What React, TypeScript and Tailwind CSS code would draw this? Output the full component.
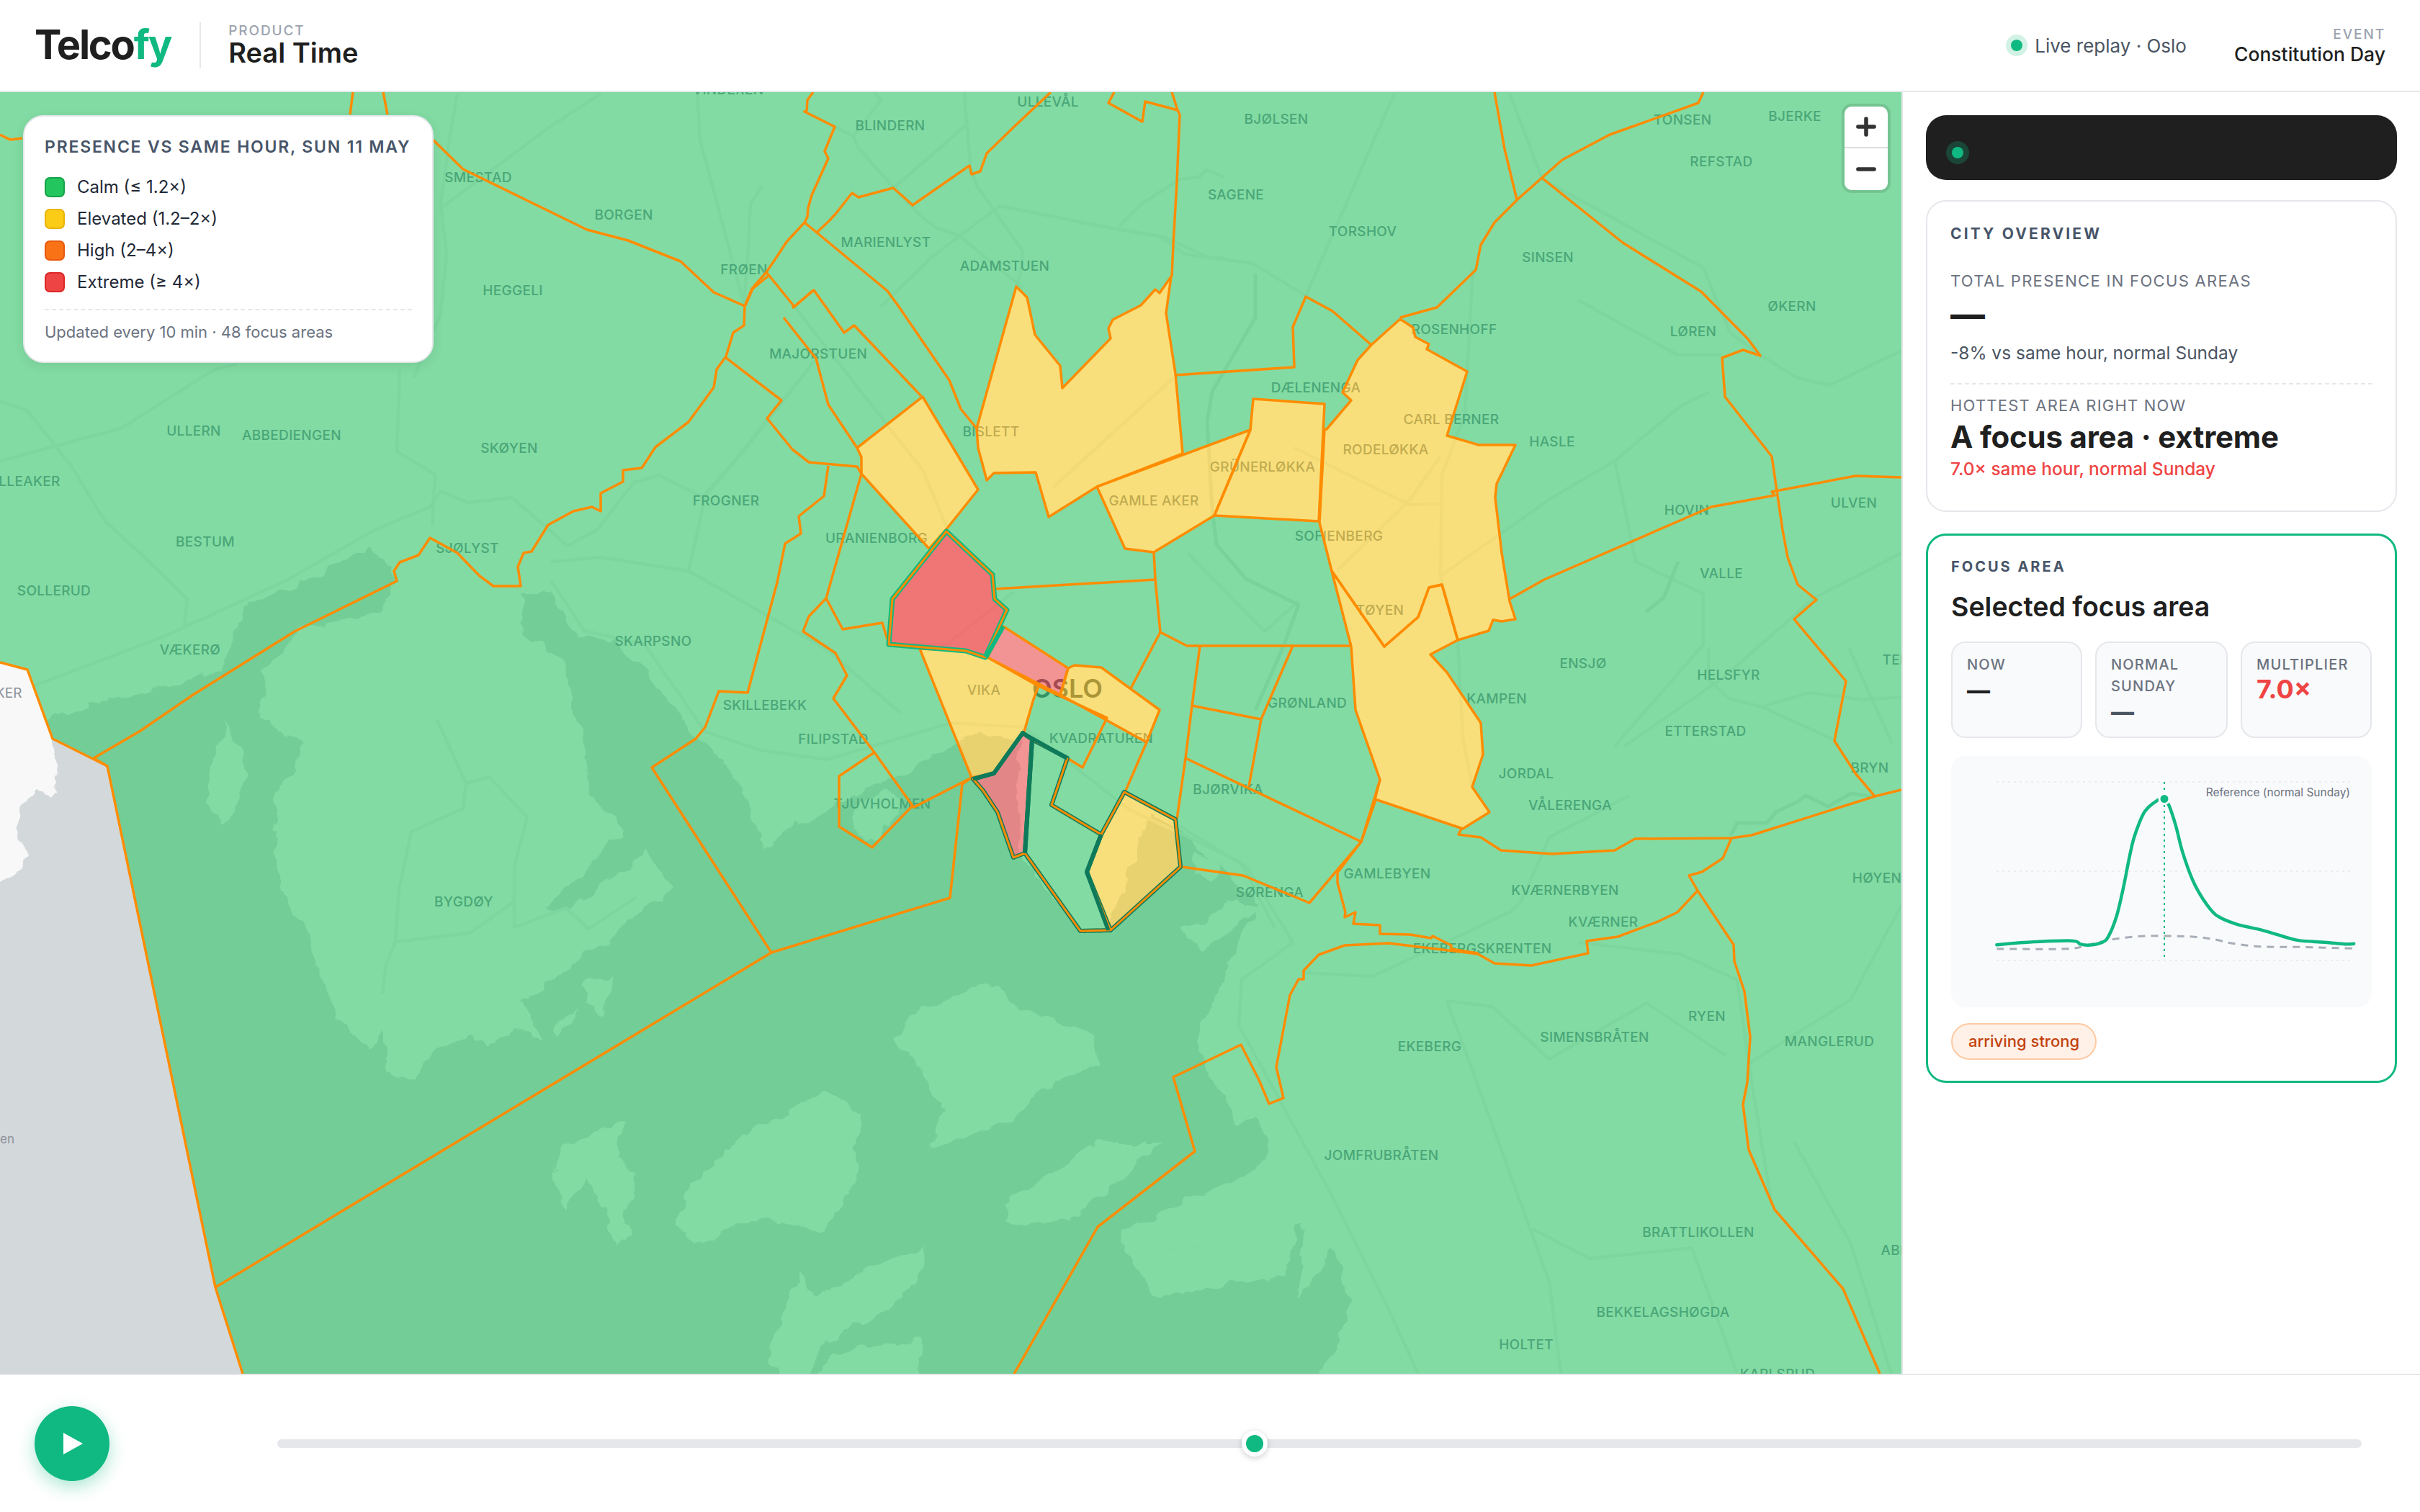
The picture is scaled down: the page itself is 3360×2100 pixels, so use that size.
import { Minus, Plus } from "lucide-react";

/* Map geometry uses page pixels: the svg viewBox starts at y=128, just under the header. */

const WATER =
  "77,997 122,978 230,953 306,934 337,844 413,812 520,758 551,806 528,850 413,876 367,933 363,997 371,1000 420,1035 380,1111 388,1235 429,1299 446,1352 473,1417 513,1458 536,1428 536,1487 580,1499 598,1464 652,1434 688,1452 714,1428 750,1440 728,1393 768,1364 804,1334 821,1323 933,1235 897,1188 777,1270 757,1258 804,1217 866,1150 817,1103 813,1047 796,985 780,914 727,883 723,825 765,822 803,883 857,889 972,1029 1000,1053 1036,1100 1062,1182 1080,1164 1100,1150 1328,1034 1361,1016 1418,1031 1408,1101 1415,1186 1500,1293 1539,1292 1562,1235 1596,1131 1637,1152 1748,1257 1669,1424 1665,1461 1685,1497 1716,1560 1744,1550 1760,1581 1748,1623 1629,1675 1574,1701 1550,1712 1570,1751 1787,1701 1807,1700 1803,1806 1851,1733 1878,1811 1825,1940 -30,1940 -30,1050";

const ISLANDS = [
  "1241,1446 1277,1399 1384,1364 1400,1390 1479,1424 1519,1435 1523,1477 1447,1518 1400,1560 1290,1593 1312,1540 1270,1470",
  "960,1645 1036,1575 1143,1516 1196,1546 1188,1634 1143,1710 1045,1692 960,1734 938,1698",
  "768,1634 786,1587 866,1557 857,1610 884,1634 870,1687 879,1716 853,1728 826,1657 812,1634 786,1680",
  "1062,1886 1112,1763 1129,1804 1188,1769 1286,1733 1268,1786 1196,1839 1134,1869 1116,1940",
  "1112,1940 1160,1880 1277,1860 1277,1940",
  "1400,1665 1526,1586 1613,1586 1558,1639 1479,1694 1400,1700",
  "808,1367 848,1352 835,1405 815,1395",
  "768,1428 804,1399 800,1420 775,1436",
  "286,1117 312,1000 344,1076 312,1144",
  "1185,1120 1225,1100 1250,1110 1215,1170 1190,1165",
  "1641,1293 1669,1320 1748,1262 1716,1252 1677,1273",
  "1661,1184 1693,1199 1680,1225 1655,1215",
  "1570,1751 1787,1701 1800,1701 1790,1770 1600,1800",
];

const ROADS = [
  "46,953 230,883 398,806 520,736 597,704 612,682 650,698 711,691 788,758 830,735 880,670 915,660 975,690 1030,630 1132,500",
  "0,557 38,570 99,647 145,723 207,780 260,832 256,870",
  "0,640 168,595 298,513 329,506",
  "555,513 551,627 604,659 600,730",
  "765,780 834,774 956,793 1148,902 1250,990",
  "765,806 811,876 895,895 979,1016 1056,1042 1148,1055 1321,1004 1421,1010 1569,1125 1636,1156 1723,1198 1770,1289",
  "612,289 765,175 834,130",
  "635,130 624,194 612,283 620,353 612,436 574,525",
  "968,130 972,194 1033,423",
  "956,793 979,691 1132,500",
  "2140,248 2227,296 2365,372 2402,462 2445,494 2496,525 2540,535 2640,487",
  "1500,309 1609,328 1645,353 1740,366 1813,411 1849,432",
  "1936,130 1813,411",
  "2045,372 2034,576 2002,659 2000,800 2024,889 2031,1023 2044,1093",
  "2096,130 2140,245",
  "2373,545 2333,564 2242,640 2155,691 2000,800",
  "2242,640 2271,780 2365,825 2365,895 2242,1036",
  "2640,768 2518,831 2394,940 2256,1036",
  "2191,417 2329,493 2391,493",
  "1649,768 1756,877 1803,835",
  "1408,822 1314,895 1234,895",
  "1857,792 1957,695 1999,635",
  "1629,525 1462,677",
  "1797,622 1957,701 2000,700",
  "1100,422 1281,653 1314,731",
  "1637,1147 1732,1205 1795,1309 1724,1361 1720,1424 1780,1534 1843,1649 1922,1806 1969,1908",
  "1811,1351 1906,1356 2096,1267 2112,1252 2151,1163 2262,1105",
  "2191,1309 2333,1325 2412,1361 2428,1477 2460,1675",
  "2640,1257 2570,1388 2428,1477",
  "2009,1390 2072,1398 2151,1471 2286,1393 2349,1435 2396,1466",
  "2009,1390 2151,1780 2167,1908",
  "2128,1707 2207,1748 2349,1733 2412,1908",
  "2491,1586 2570,1728 2626,1908",
  "607,1000 647,1088 643,1123 571,1155 554,1235 549,1308 536,1340 531,1381",
  "647,1088 679,1079 732,1135 714,1205 714,1288 786,1261 817,1290 884,1246",
  "549,1308 652,1296 714,1252",
  "1339,128 1342,169 1348,236 1357,259 1420,349 1417,379 1411,398",
  "1159,176 1185,189 1192,206 1219,236 1241,261 1277,299 1299,316 1330,326 1420,400",
  "1223,426 1295,356 1388,286 1554,319 1616,329 1679,358 1700,359",
  "1185,189 1223,139 1214,128",
  "1241,261 1342,173",
  "1554,314 1585,283 1638,249 1665,246 1674,236 1700,246",
  "2372,900 2372,943 2400,970 2447,982 2545,1027",
  "2450,980 2513,962 2587,972 2640,968",
  "2567,900 2627,1033",
  "1058,259 1042,283 1038,359 1033,423",
];

const RIVERS = [
  "1743,380 1743,441 1683,544 1676,586 1683,707 1689,756 1730,804 1803,840 1783,895 1743,986",
  "2403,1160 2412,1143 2453,1143 2467,1127 2497,1113 2507,1105 2538,1120 2570,1102 2603,1107",
  "2330,780 2310,830 2285,850",
];

const LABELS: [string, number, number][] = [
  ["SMESTAD", 664, 246], ["BORGEN", 866, 298], ["HEGGELI", 712, 403], ["FRØEN", 1033, 374],
  ["MAJORSTUEN", 1136, 491], ["ULLERN", 269, 598], ["ABBEDIENGEN", 405, 604], ["SKØYEN", 707, 622],
  ["FROGNER", 1008, 695], ["LLEAKER", 41, 668], ["BESTUM", 285, 752], ["SJØLYST", 649, 761],
  ["SOLLERUD", 75, 820], ["VÆKERØ", 264, 902], ["SKARPSNO", 907, 890], ["SKILLEBEKK", 1062, 979],
  ["FILIPSTAD", 1157, 1026], ["URANIENBORG", 1217, 747], ["BISLETT", 1376, 599], ["GAMLE AKER", 1602, 695],
  ["GRÜNERLØKKA", 1753, 648], ["RODELØKKA", 1924, 624], ["CARL BERNER", 2015, 582], ["DÆLENENGA", 1827, 538],
  ["ROSENHOFF", 2019, 457], ["SOFIENBERG", 1859, 744], ["TØYEN", 1916, 847], ["VIKA", 1366, 958],
  ["KVADRATUREN", 1529, 1025], ["GRØNLAND", 1815, 976], ["KAMPEN", 2078, 970], ["JORDAL", 2119, 1074],
  ["TJUVHOLMEN", 1225, 1116], ["BJØRVIKA", 1705, 1096], ["SØRENGA", 1763, 1239], ["GAMLEBYEN", 1926, 1213],
  ["EKEBERGSKRENTEN", 2058, 1317], ["BJØLSEN", 1772, 165], ["TONSEN", 2336, 166], ["BJERKE", 2492, 161],
  ["REFSTAD", 2390, 224], ["SAGENE", 1716, 270], ["TORSHOV", 1892, 321], ["SINSEN", 2149, 357],
  ["ØKERN", 2488, 425], ["LØREN", 2351, 460], ["HASLE", 2155, 613], ["ULVEN", 2574, 698],
  ["HOVIN", 2342, 708], ["VALLE", 2390, 796], ["ENSJØ", 2198, 921], ["HELSFYR", 2400, 937],
  ["TEISEN", 2648, 916], ["ETTERSTAD", 2368, 1015], ["BRYN", 2596, 1066], ["VÅLERENGA", 2180, 1118],
  ["KVÆRNERBYEN", 2173, 1236], ["KVÆRNER", 2226, 1280], ["SIMENSBRÅTEN", 2214, 1440], ["RYEN", 2370, 1411],
  ["MANGLERUD", 2540, 1446], ["EKEBERG", 1985, 1453], ["JOMFRUBRÅTEN", 1918, 1604], ["BRATTLIKOLLEN", 2358, 1711],
  ["BEKKELAGSHØGDA", 2309, 1822], ["HOLTET", 2119, 1867], ["KARLSRUD", 2468, 1908], ["HØYEN", 2606, 1219],
  ["ABILD", 2640, 1736], ["BYGDØY", 644, 1252], ["BLINDERN", 1236, 174], ["MARIENLYST", 1230, 336],
  ["ADAMSTUEN", 1395, 369], ["ULLEVÅL", 1455, 141], ["VINDEREN", 1011, 124],
];

const Y1 = "1190,622 1281,551 1358,680 1314,735 1290,762 1196,658 1196,635";
const Y2 =
  "1411,398 1426,413 1437,465 1472,508 1475,539 1542,470 1539,456 1545,444 1584,424 1604,402 1610,407 1626,384 1619,435 1632,519 1642,630 1523,676 1456,718 1438,656 1380,657 1370,667 1358,622 1356,595";
const Y3 = "1523,676 1736,597 1686,716 1602,767 1562,762";
const Y4 = "1740,554 1839,561 1831,724 1686,716 1736,597";
const Y5 =
  "1944,443 1962,455 1965,468 1984,478 1981,485 2037,516 2009,605 2053,618 2104,618 2078,672 2076,691 2085,768 2096,835 2104,860 2085,863 2073,861 2067,876 2024,889 2002,812 1984,816 1969,857 1922,898 1849,793 1832,726 1839,596 1842,596 1876,556 1864,545 1885,500 1904,479";
const Y6 =
  "1849,793 1922,898 1969,857 1984,816 2002,812 2024,889 1986,909 2009,934 2056,1004 2059,1048 2044,1093 2068,1128 2031,1151 1909,1110 1916,1083 1882,986 1876,898";
const Y7 = "1277,901 1341,904 1371,913 1442,953 1435,971 1422,1016 1380,1074 1349,1080";
const Y8 = "1483,928 1492,924 1529,927 1610,986 1592,1031 1472,965";
const Y9 = "1561,1100 1632,1138 1639,1204 1542,1292 1509,1211 1529,1159";
const R1 = "1314,738 1378,798 1381,832 1398,847 1368,913 1341,904 1234,895 1239,832";
const R2 = "1393,870 1483,928 1472,965 1371,913";
const R3 = "1420,1018 1433,1027 1423,1185 1407,1191 1385,1128 1365,1098 1351,1082 1380,1074";
const G1 = "1433,1027 1482,1053 1460,1118 1529,1159 1509,1211 1539,1292 1500,1293 1423,1185";

const OUTLINES = [
  "1100,428 1130,403 1172,462 1186,452 1279,550",
  "1088,441 1133,498 1150,562 1190,622",
  "1117,309 1134,323 1232,404 1248,426 1318,528 1334,568 1356,595",
  "1100,624 1123,642 1190,648 1196,658 1147,831 1170,874 1225,865 1234,895",
  "1150,647 1144,689 1109,717 1112,741 1090,755 1079,809 1038,962 998,960 979,1010 966,1026 905,1066 1071,1323",
  "1147,831 1123,856 1115,877 1160,907 1176,938 1157,970 1214,1045 1267,1119 1211,1177 1165,1148 1165,1078 1214,1045",
  "1267,1122 1349,1080 1336,1089 1319,1247 1071,1323 299,1788",
  "1381,818 1604,805",
  "1602,767 1604,805 1611,878 1570,956",
  "1611,878 1648,897 1876,897",
  "1666,897 1655,980 1646,1053 1634,1138",
  "1795,897 1751,999 1734,1092",
  "1655,980 1751,999",
  "1646,1053 1890,1169 1818,1254 1726,1216 1641,1204",
  "1890,1169 1916,1083",
  "1592,1031 1562,1100",
  "1442,953 1537,997 1503,1066 1482,1053",
  "1631,521 1797,510 1795,454 1813,412 1850,432 1904,479",
  "1944,441 1995,427 2049,375 2056,340 2075,309 2107,277 2169,222 2235,187 2358,143 2365,128",
  "2075,128 2089,207 2106,277",
  "2142,248 2253,337 2362,405 2427,471 2444,494 2420,486 2391,497 2395,551 2460,634 2475,736 2482,774 2496,812 2522,833 2491,860 2563,946 2547,1029 2576,1074 2603,1106",
  "2096,832 2144,805 2376,704 2464,688 2460,683 2576,661 2640,663",
  "2640,1097 2603,1106 2432,1160 2404,1164 2270,1165 2242,1181 2155,1186 2084,1181 2056,1163 2025,1159 2029,1151",
  "2404,1164 2392,1192 2363,1211 2345,1216 2357,1237 2407,1312 2408,1335 2422,1377 2430,1440 2426,1503 2420,1534 2428,1597 2464,1680 2559,1790 2610,1908",
  "2357,1237 2329,1267 2302,1280 2246,1301 2203,1307 2205,1324 2126,1341 2075,1338 2052,1325 1928,1310 1867,1313 1831,1326 1810,1348 1810,1360 1803,1360 1791,1382 1772,1482 1782,1525 1762,1533 1748,1500 1723,1451 1629,1496 1659,1599 1524,1704 1408,1908",
  "1910,1111 1890,1169 1857,1212 1857,1226 1868,1267 1867,1274 1882,1267 1879,1283 1916,1285 1916,1297 1958,1298 1987,1303 1989,1300 2015,1313 2015,1318 2052,1324",
  "0,187 14,194 31,192",
  "486,159 490,128",
  "538,159 532,128",
  "601,194 643,235 815,319 872,334 945,363 991,406 1034,425",
  "1129,128 1121,139 1120,154 1117,155 1159,176 1145,210 1150,220 1127,271 1122,289 1121,301 1117,309 1092,336 1079,356 1064,378 1044,401 1034,425 1033,452 1018,462 1008,495 995,513 991,538 956,586 910,621 891,650 865,653 865,669 834,685 834,710 822,704 796,710 761,729 738,766 727,768 719,787 723,814 685,814 666,800 635,768 597,747 581,771 555,781 547,793 551,807 409,877 268,965 195,1015 130,1053 149,1064",
  "1008,497 1085,556 1065,581 1100,624",
  "1134,323 1152,306 1161,296 1183,268 1192,274 1240,261 1254,273 1267,285 1346,230 1349,242 1361,238 1370,213 1408,176 1459,128",
  "1547,128 1539,143 1586,169 1590,141 1635,153 1627,128",
  "1635,153 1638,159 1634,253 1629,339 1627,384",
  "1064,378 1103,426 1129,403",
  "1067,383 1045,401 1035,424",
  "0,920 38,930 73,1026 149,1064 299,1788 337,1908",
];

/* Only the areas with their own colour are cut out of the calm green layer. */
const HOT_AREAS = [Y1, Y2, Y3, Y4, Y5, Y6, Y7, Y8, Y9, R1, R2, R3];

const LAND_EDGE = "0,128 2640,128 2640,1908 337,1908 299,1788 149,1064 73,1026 38,930 0,920";

function OsloMap() {
  return (
    <svg viewBox="0 128 2640 1780" className="block h-full w-full" fill="none">
      <defs>
        <mask id="calm" maskUnits="userSpaceOnUse" x="0" y="128" width="2640" height="1780">
          <polygon points={LAND_EDGE} fill="#fff" />
          {HOT_AREAS.map((p) => (
            <polygon key={p} points={p} fill="#000" />
          ))}
        </mask>
        {/* roughens the hand-placed coastline */}
        <filter id="coast" filterUnits="userSpaceOnUse" x="-60" y="100" width="2760" height="1880">
          <feTurbulence type="fractalNoise" baseFrequency="0.035" numOctaves="3" seed="4" />
          <feDisplacementMap in="SourceGraphic" scale="22" xChannelSelector="R" yChannelSelector="G" />
        </filter>
      </defs>

      {/* base map */}
      <rect x="0" y="128" width="2640" height="1780" fill="#f5f6f5" />
      <g filter="url(#coast)">
        <polygon points={WATER} fill="#d3d8db" />
        {ISLANDS.map((p) => (
          <polygon key={p} points={p} fill="#f5f6f5" />
        ))}
        <polygon
          points="-30,920 38,930 73,1026 76,1060 80,1100 68,1110 55,1100 40,1105 20,1150 40,1190 30,1205 -30,1246"
          fill="#f8f8f8"
        />
      </g>
      {ROADS.map((p) => (
        <polyline key={p} points={p} stroke="#e9ecea" strokeWidth="4.5" strokeLinejoin="round" />
      ))}
      {RIVERS.map((p) => (
        <polyline key={p} points={p} stroke="#dfe4e4" strokeWidth="5" strokeLinejoin="round" />
      ))}
      <g className="text-[19px] font-medium" fill="#7b8298" textAnchor="middle">
        {LABELS.map(([t, x, y]) => (
          <text key={t} x={x} y={y + 7} letterSpacing="0.3">
            {t}
          </text>
        ))}
      </g>
      <text x="1482" y="969" textAnchor="middle" fill="#4b5563" className="text-[36px] font-semibold">
        OSLO
      </text>
      <text x="-6" y="969" fill="#8a9099" className="text-[19px]">
        KER
      </text>
      <text x="0" y="1588" fill="#8a9099" className="text-[17px]">
        en
      </text>

      {/* presence layers */}
      <rect x="0" y="128" width="2640" height="1780" fill="#22c55e" fillOpacity="0.55" mask="url(#calm)" />
      {[Y1, Y2, Y3, Y4, Y5, Y6, Y7, Y8, Y9].map((p) => (
        <polygon key={p} points={p} fill="#facc15" fillOpacity="0.55" />
      ))}
      <polygon points={R1} fill="#ef4444" fillOpacity="0.72" />
      <polygon points={R2} fill="#ef4444" fillOpacity="0.55" />
      <polygon points={R3} fill="#ef4444" fillOpacity="0.55" />

      {/* borders */}
      <g stroke="#ff8c00" strokeWidth="3.5" strokeLinejoin="round">
        {OUTLINES.map((p) => (
          <polyline key={p} points={p} />
        ))}
        {[Y1, Y2, Y3, Y4, Y5, Y6, Y7, Y8].map((p) => (
          <polygon key={p} points={p} />
        ))}
        <polygon points={R2} />
      </g>
      <polygon points={R1} stroke="#10b981" strokeWidth="7" strokeLinejoin="round" />
      <polygon points={R1} stroke="#ff8c00" strokeWidth="3" strokeLinejoin="round" />
      <polyline points="1393,870 1369,913" stroke="#10b981" strokeWidth="6" />
      <g strokeLinejoin="round">
        <polygon points={R3} stroke="#0f7a5a" strokeWidth="6" />
        <polygon points={G1} stroke="#0f7a5a" strokeWidth="6" />
        <polygon points={Y9} stroke="#0f7a5a" strokeWidth="6" />
        <polygon points={R3} stroke="#ff8c00" strokeWidth="3" />
        <polygon points={G1} stroke="#ff8c00" strokeWidth="3" />
        <polygon points={Y9} stroke="#ff8c00" strokeWidth="3" />
      </g>
      <g stroke="#0f7a5a" strokeWidth="5" strokeLinejoin="round">
        <polyline points="1351,1082 1380,1074 1420,1018 1482,1053" />
        <polyline points="1433,1027 1423,1185" />
        <polyline points="1529,1159 1509,1211 1539,1292" />
      </g>
    </svg>
  );
}

const GREEN_LINE: [number, number][] = [
  [288, 1142], [380, 1135], [515, 1131], [540, 1140], [565, 1143], [605, 1136], [625, 1120], [650, 1065],
  [670, 990], [690, 900], [705, 845], [735, 780], [775, 748], [794, 744], [810, 765], [830, 820], [850, 890],
  [880, 965], [910, 1015], [950, 1060], [1010, 1085], [1090, 1102], [1150, 1118], [1200, 1130], [1280, 1135],
  [1340, 1140], [1368, 1139],
];

const REF_LINE: [number, number][] = [
  [288, 1153], [500, 1153], [560, 1143], [640, 1127], [740, 1118], [880, 1120], [950, 1128], [1000, 1138],
  [1090, 1147], [1200, 1148], [1368, 1152],
];

// catmull-rom through the points, in the chart's own pixels
function curve(points: [number, number][]) {
  const p = points.map(([x, y]) => [(x - 150) / 2.178, (y - 628) / 1.96]);
  let d = `M${p[0][0]} ${p[0][1]}`;
  for (let i = 0; i < p.length - 1; i++) {
    const a = p[Math.max(i - 1, 0)];
    const b = p[i];
    const c = p[i + 1];
    const e = p[Math.min(i + 2, p.length - 1)];
    d += ` C${b[0] + (c[0] - a[0]) / 6} ${b[1] + (c[1] - a[1]) / 6} ${c[0] - (e[0] - b[0]) / 6} ${c[1] - (e[1] - b[1]) / 6} ${c[0]} ${c[1]}`;
  }
  return d;
}

function PeakChart() {
  return (
    <svg viewBox="0 0 584 349" className="block h-full w-full" fill="none">
      {[36, 160, 284].map((y) => (
        <line key={y} x1="63" x2="559" y1={y} y2={y} stroke="#e5e7eb" strokeWidth="1.5" strokeDasharray="3 5" />
      ))}
      <path d={curve(REF_LINE)} stroke="#a8aeb8" strokeWidth="3" strokeDasharray="10 8" />
      <path d={curve(GREEN_LINE)} stroke="#10b981" strokeWidth="4.5" strokeLinecap="round" />
      <line x1="296" x2="296" y1="36" y2="281" stroke="#10b981" strokeWidth="2" strokeDasharray="3 5" />
      <circle cx="296" cy="59.5" r="7" fill="#10b981" stroke="#f9fafb" strokeWidth="3" />
      <text x="554" y="56" textAnchor="end" fill="#6b7280" className="text-[15.5px]">
        Reference (normal Sunday)
      </text>
    </svg>
  );
}

const LEGEND = [
  { label: "Calm (≤ 1.2×)", swatch: "bg-[#22c55e] border-[#16a34a]" },
  { label: "Elevated (1.2–2×)", swatch: "bg-[#facc15] border-[#eab308]" },
  { label: "High (2–4×)", swatch: "bg-[#f97316] border-[#ea580c]" },
  { label: "Extreme (≥ 4×)", swatch: "bg-[#ef4444] border-[#dc2626]" },
];

function Legend() {
  return (
    <div className="absolute left-[32px] top-[32px] w-[570px] h-[344px] rounded-[28px] border-2 border-[#e5e7eb] bg-white px-[28px] pt-[24px] shadow-[0_4px_16px_rgba(0,0,0,0.08)]">
      <div className="text-[23px] leading-[36px] font-semibold tracking-[0.078em] text-[#475569] whitespace-nowrap">
        PRESENCE VS SAME HOUR, SUN 11 MAY
      </div>
      <div className="mt-[24px] flex flex-col gap-[16px]">
        {LEGEND.map((l) => (
          <div key={l.label} className="flex h-[28px] items-center gap-[17px]">
            <span className={`h-[28px] w-[28px] rounded-[7px] border-2 ${l.swatch}`} />
            <span className="text-[24px] leading-[28px] text-[#1f2937]">{l.label}</span>
          </div>
        ))}
      </div>
      <div className="mt-[23px] border-t-2 border-dashed border-[#e5e7eb]" />
      <div className="mt-[15px] text-[22px] leading-[30px] text-[#6b7280]">Updated every 10 min · 48 focus areas</div>
    </div>
  );
}

function Stat({ label, children }: { label: string; children: React.ReactNode }) {
  return (
    <div className="h-[134px] rounded-[20px] border-2 border-[#e5e7eb] bg-[#f9fafb] pl-[20px] pt-[15px]">
      <div className="text-[20px] leading-[30px] font-medium tracking-[0.06em] text-[#6b7280]">{label}</div>
      {children}
    </div>
  );
}

export default function App() {
  return (
    <div className="flex h-screen w-full flex-col overflow-hidden bg-white text-[#1f1f1f] [font-family:Inter,sans-serif]">
      {/* Header */}
      <header className="flex h-[128px] shrink-0 items-center border-b-2 border-[#e5e7eb] pl-[48px] pr-[48px]">
        <div className="text-[56px] leading-none font-bold tracking-[-0.04em] pb-[2px]">
          Telco<span className="text-[#10b981]">fy</span>
        </div>
        <div className="ml-[40px] h-[64px] w-[2px] bg-[#e5e7eb]" />
        <div className="ml-[38px] pb-[6px]">
          <div className="text-[19px] leading-[26px] font-medium tracking-[0.1em] text-[#9ca3af]">PRODUCT</div>
          <div className="text-[38px] leading-[34px] font-semibold">Real Time</div>
        </div>
        <div className="ml-auto flex items-center">
          <span className="h-[16px] w-[16px] rounded-full bg-[#10b981] ring-[7px] ring-[#d1f2e5]" />
          <span className="ml-[17px] text-[26px] text-[#4b5563]">Live replay · Oslo</span>
        </div>
        <div className="ml-[66px] text-right">
          <div className="text-[19px] leading-[24px] font-medium tracking-[0.1em] text-[#9ca3af]">EVENT</div>
          <div className="text-[26.5px] leading-[30px] font-medium">Constitution Day</div>
        </div>
      </header>

      <div className="flex min-h-0 flex-1">
        {/* Map */}
        <main className="relative min-w-0 flex-1 overflow-hidden">
          <OsloMap />
          <Legend />
          <div className="absolute right-[19px] top-[20px] w-[60px] rounded-[10px] bg-white shadow-[0_0_0_4px_rgba(0,0,0,0.1)]">
            <button className="flex h-[58px] w-full items-center justify-center border-b-2 border-[#dddddd] text-[#333333]">
              <Plus size={38} strokeWidth={3.5} />
            </button>
            <button className="flex h-[58px] w-full items-center justify-center text-[#333333]">
              <Minus size={38} strokeWidth={3.5} />
            </button>
          </div>
        </main>

        {/* Sidebar */}
        <aside className="flex w-[720px] shrink-0 flex-col border-l-2 border-[#e5e7eb] px-[32px] pt-[32px]">
          <div className="h-[90px] rounded-[28px] bg-[#1f1f1f] pl-[36px] pt-[44px]">
            <div className="h-[16px] w-[16px] rounded-full bg-[#10b981] ring-[8px] ring-[#10b981]/25" />
          </div>

          <section className="mt-[28px] h-[433px] rounded-[28px] border-2 border-[#e5e7eb] px-[32px] pt-[30px]">
            <h2 className="text-[21px] leading-[30px] font-bold tracking-[0.15em] text-[#475569]">CITY OVERVIEW</h2>
            <div className="mt-[35px] text-[22px] leading-[30px] tracking-[0.06em] text-[#6b7280]">
              TOTAL PRESENCE IN FOCUS AREAS
            </div>
            <div className="mt-[2px] text-[48px] leading-[60px] font-extrabold">—</div>
            <div className="mt-[7px] text-[24.5px] leading-[32px] text-[#4b5563]">-8% vs same hour, normal Sunday</div>
            <div className="mt-[26px] border-t-2 border-dashed border-[#e5e7eb]" />
            <div className="mt-[14px] text-[22px] leading-[30px] tracking-[0.055em] text-[#6b7280]">
              HOTTEST AREA RIGHT NOW
            </div>
            <div className="mt-[4px] text-[42px] leading-[50px] font-bold tracking-[-0.005em]">A focus area · extreme</div>
            <div className="mt-[3px] text-[24.5px] leading-[32px] font-medium text-[#ef4444]">
              7.0× same hour, normal Sunday
            </div>
          </section>

          <section className="mt-[30px] h-[763px] rounded-[28px] border-[3px] border-[#10b981] px-[32px] pt-[28px]">
            <h2 className="text-[20px] leading-[30px] font-bold tracking-[0.15em] text-[#475569]">FOCUS AREA</h2>
            <div className="mt-[18px] text-[37.5px] leading-[46px] font-semibold">Selected focus area</div>
            <div className="mt-[25px] grid grid-cols-[182px_184px_182px] gap-[18px]">
              <Stat label="NOW">
                <div className="mt-[6px] text-[32px] leading-[30px] font-extrabold">—</div>
              </Stat>
              <Stat label="NORMAL SUNDAY">
                <div className="mt-[6px] text-[32px] leading-[30px] font-extrabold text-[#4b5563]">—</div>
              </Stat>
              <Stat label="MULTIPLIER">
                <div className="mt-[4px] text-[36px] leading-[30px] font-bold text-[#ef4444]">7.0×</div>
              </Stat>
            </div>
            <div className="mt-[25px] h-[349px] rounded-[20px] bg-[#f9fafb]">
              <PeakChart />
            </div>
            <span className="mt-[22px] inline-flex h-[51px] items-center rounded-full border-2 border-[#fdcaa4] bg-[#fff1e8] px-[22px] text-[22px] font-medium text-[#c2410c]">
              arriving strong
            </span>
          </section>
        </aside>
      </div>

      {/* Replay bar */}
      <footer className="flex h-[192px] shrink-0 items-center border-t-2 border-[#e5e7eb] pl-[48px] pr-[81px]">
        <button className="flex h-[104px] w-[104px] shrink-0 items-center justify-center rounded-full bg-[#10b981] shadow-[0_8px_24px_rgba(16,185,129,0.35)]">
          <svg width="27" height="30" viewBox="0 0 27 30" className="ml-[3px]">
            <polygon points="0,0 27,15 0,30" fill="#fff" />
          </svg>
        </button>
        <div className="relative ml-[233px] h-[12px] flex-1 rounded-full bg-[#e5e7eb]">
          <div className="absolute left-[46.9%] top-1/2 h-[36px] w-[36px] -translate-x-1/2 -translate-y-1/2 rounded-full border-[6px] border-white bg-[#10b981] shadow-[0_2px_8px_rgba(0,0,0,0.2)]" />
        </div>
      </footer>
    </div>
  );
}
